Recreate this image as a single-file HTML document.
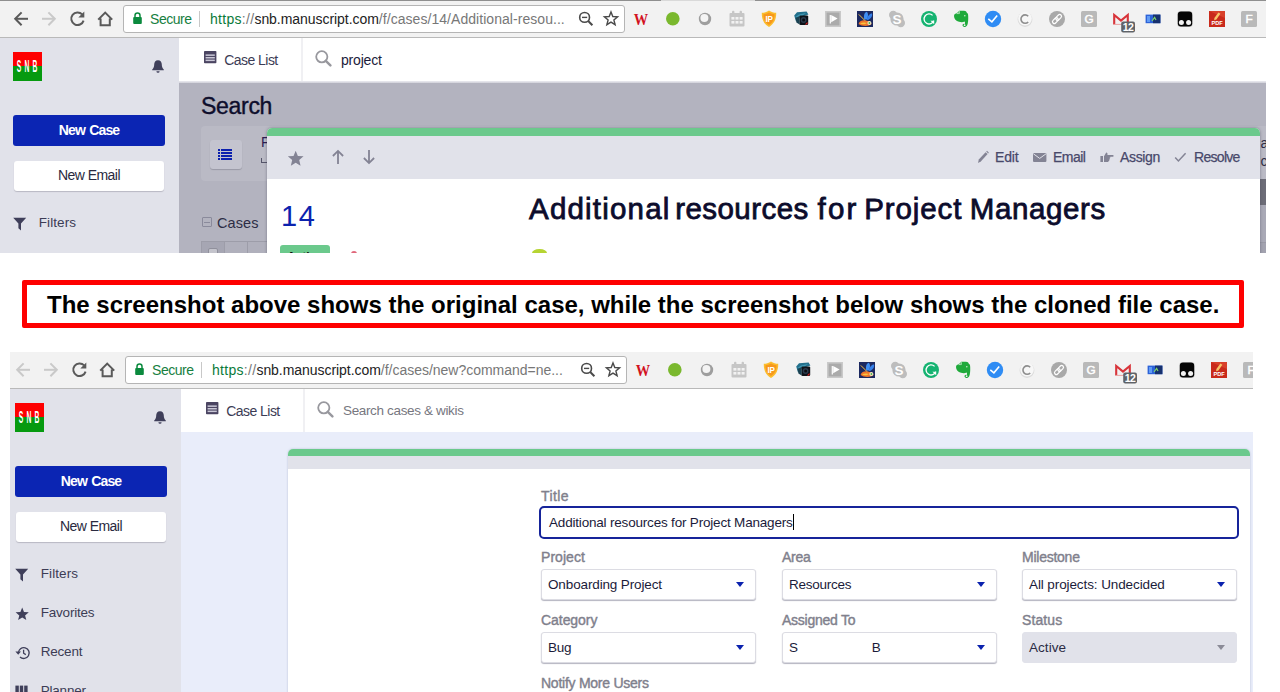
<!DOCTYPE html>
<html lang="en">
<head>
<meta charset="utf-8">
<title>Clone case comparison</title>
<style>
*{box-sizing:border-box;margin:0;padding:0}
html,body{width:1280px;height:692px;overflow:hidden;background:#fff}
body{font-family:"Liberation Sans",sans-serif;color:#1b1b3a;position:relative}
.abs{position:absolute}
.shot{position:absolute;overflow:hidden;background:#fff}
.inner{position:absolute;left:0;top:0;width:1266px;height:700px}
/* browser chrome */
.chrome{position:absolute;left:0;top:0;width:1266px;height:38px;background:#f2f2f2;border-bottom:1px solid #b9b9b9}
.chrome .topline{position:absolute;left:0;top:0;width:100%;height:1px;background:linear-gradient(90deg,#8f8f8f 0,#8f8f8f 661px,#d9d9d9 661px,#d9d9d9 755px,#8f8f8f 755px)}
.omni{position:absolute;left:123px;top:5px;width:502px;height:28px;background:#fff;border:1px solid #b5b5b5;border-radius:3px}
.omni .secure{position:absolute;left:26px;top:5px;font-size:14px;color:#17803f;letter-spacing:-0.45px}
.omni .sep{position:absolute;left:75px;top:5px;width:1px;height:16px;background:#c8c8c8}
.omni .url{position:absolute;left:86px;top:5px;font-size:14px;color:#777;white-space:nowrap;letter-spacing:0.05px}
.omni .url u{text-decoration:none;letter-spacing:0.3px}
.omni .url b{font-weight:normal;color:#222;letter-spacing:-0.05px}
.omni .url i{font-style:normal;color:#0b7a3a}
.ext{position:absolute;top:10px;width:17px;height:17px}
/* app */
.side{position:absolute;left:0;top:38px;width:179px;height:700px;background:#e1e2ea}
.logo{position:absolute;left:13px;top:52px;width:29px;height:29px;background:linear-gradient(#fe0000 0,#fe0000 49%,#069a10 49%,#069a10 100%)}
.logo span{position:absolute;top:5px;width:12px;margin-left:-6px;text-align:center;color:#fff;font-size:16px;font-weight:bold;line-height:20px;transform:scaleX(.42)}
.btn1{position:absolute;left:13px;top:115px;width:152px;height:31px;background:#0b25b3;border-radius:3px;color:#fff;font-weight:bold;font-size:14px;text-align:center;line-height:30px;letter-spacing:-0.9px;word-spacing:1.4px}
.btn2{position:absolute;left:14px;top:161px;width:150px;height:30px;background:#fff;border-radius:3px;color:#2a2a40;font-size:14px;text-align:center;line-height:29.5px;box-shadow:0 1px 1px #b9b9c4;letter-spacing:-0.55px}
.mi{position:absolute;left:38.7px;font-size:13.5px;color:#3c3c55;letter-spacing:-0.2px}
.hdr{position:absolute;left:179px;top:38px;width:1087px;height:45px;background:#fff}
.hdr .sepv{position:absolute;left:122px;top:0;width:2px;height:44px;background:#f0f0f3}
.hdr .cl{position:absolute;left:45.3px;top:13.5px;font-size:14px;color:#3c3c55;letter-spacing:-0.55px}
.hdr .q{position:absolute;left:162px;top:13.5px;font-size:14px;color:#1b1b3a;letter-spacing:-0.2px}

/* top main (search page, dimmed) */
.dim{position:absolute;left:179px;top:82px;width:1087px;height:700px;background:#b3b3bf}
.dim .h{position:absolute;left:22px;top:11px;font-size:23px;color:#0e0e2c;letter-spacing:-0.3px;-webkit-text-stroke:0.4px #0e0e2c}
.dim .panel{position:absolute;left:22px;top:44px;width:1070px;height:55px;background:#babac5;border-radius:4px}
.dim .lbtn{position:absolute;left:31px;top:58px;width:32px;height:29px;background:#c4c4cf;border-radius:3px;box-shadow:0 1px 1px #9a9aa6}
.dim .cases{position:absolute;left:38px;top:133px;font-size:14.5px;color:#2d2d45;letter-spacing:0.1px}
.dim .colps{position:absolute;left:23px;top:135px;width:10px;height:10px;border:1px solid #8a8a9b;border-radius:1px}
.dim .colps:after{content:"";position:absolute;left:1px;top:3.5px;width:6px;height:1px;background:#8a8a9b}
.dim .th{position:absolute;left:22px;top:159px;width:70px;height:20px;background:#b0b0bc;border-top:1px solid #9d9da9;border-left:1px solid #9d9da9}
.dim .th i{position:absolute;top:0;height:20px;border-right:1px solid #9d9da9}
.dim .th b{position:absolute;left:6px;top:6px;width:10px;height:10px;border:1px solid #90909c;border-radius:2px;background:#c4c4cc}
/* modal */
.modal{position:absolute;left:267px;top:128px;width:993px;height:600px;background:#fff;border-radius:5px 5px 0 0;overflow:hidden;box-shadow:0 0 3px rgba(60,60,80,.5)}
.modal .g{position:absolute;left:0;top:0;width:100%;height:8px;background:#6bc98c}
.modal .tb{position:absolute;left:0;top:8px;width:100%;height:43px;background:#e1e2ea}
.act{position:absolute;top:21px;font-size:14px;color:#48486a;letter-spacing:-0.2px;white-space:nowrap;-webkit-text-stroke:0.25px #48486a}
.num{position:absolute;left:14px;top:71.5px;font-size:29px;color:#0b22ae;letter-spacing:1.5px}
.ttl{position:absolute;left:0;top:64.3px;font-size:29.5px;color:#0c0c2c;white-space:nowrap;-webkit-text-stroke:0.8px #0c0c2c}
.ttl span{position:absolute;top:0}
.badge{position:absolute;left:13px;top:117px;width:50px;height:20px;border-radius:3px;background:#6bc98c;color:#111;font-size:12px;font-weight:bold;text-align:center;line-height:19px;padding-top:3px}

/* bottom main */
.main2{position:absolute;left:179px;top:81px;width:1087px;height:700px;background:#e9edfa}
.modal2{position:absolute;left:286px;top:98px;width:962px;height:600px;background:#fff;border-radius:5px 5px 0 0;overflow:hidden;box-shadow:0 0 2px rgba(120,130,170,.5)}
.modal2 .g{position:absolute;left:0;top:0;width:100%;height:7px;background:#6bc98c}
.modal2 .tb{position:absolute;left:0;top:7px;width:100%;height:13px;background:#e1e2ea}
.lbl{position:absolute;font-size:14px;color:#80808c;letter-spacing:-0.25px;margin-top:-1px;white-space:nowrap;-webkit-text-stroke:0.4px #80808c}
.sel{position:absolute;width:215px;height:31px;background:#fff;border:1px solid #dcdce3;border-radius:3px;box-shadow:0 1px 1px #b4b4c0;font-size:13.5px;color:#1b1b3a;line-height:29px;padding-left:6px;letter-spacing:-0.25px;white-space:nowrap}
.sel:after{content:"";position:absolute;right:10.6px;top:12px;border:4.4px solid transparent;border-top:5.4px solid #0b22ae;border-bottom:none}
.sel.dis{background:#e1e2ea;border-color:#e1e2ea;box-shadow:none;color:#2b2b45}
.sel.dis:after{border-top-color:#8b8b97}
.tin{position:absolute;left:251px;top:57px;width:700px;height:33px;border:2px solid #16249a;border-radius:5px;background:#fff;font-size:13.5px;line-height:29.5px;padding-left:8px;color:#1b1b3a;letter-spacing:-0.19px;white-space:nowrap}
.mic{position:absolute;left:13.2px;width:16px;height:16px}
.mic svg{position:absolute;left:0;top:2px}

</style>
</head>
<body>

<!-- ============ TOP SHOT ============ -->
<div class="shot" style="left:0;top:0;width:1266px;height:253px">
<div class="inner">
  <div class="chrome"><div class="topline"></div>
    <div class="omni"><span class="secure">Secure</span><span class="sep"></span><span class="url"><u><i>https</i>://</u><b>snb.manuscript.com</b>/f/cases/14/Additional-resou...</span></div>
    <svg class="csvg" width="1266" height="38" viewBox="0 0 1266 38" style="position:absolute;left:0;top:0"><g fill="none" stroke="#5a5a5a" stroke-width="2" stroke-linecap="butt" stroke-linejoin="miter"><path d="M28 18.8H16"/><path d="M21.6 12.4L15.2 18.8L21.6 25.2"/></g><g fill="none" stroke="#c9c9c9" stroke-width="2"><path d="M42 18.8H54"/><path d="M48.4 12.4L54.8 18.8L48.4 25.2"/></g><g><path d="M82.2 14.4A6.3 6.3 0 1 0 83.6 20.6" fill="none" stroke="#5a5a5a" stroke-width="2"/><path d="M84.3 11.6V17.6H78.3Z" fill="#5a5a5a"/></g><path d="M98.2 19.6L105.2 12.6L112.2 19.6M100.6 18.4V25.2H109.8V18.4" fill="none" stroke="#5a5a5a" stroke-width="2"/><g><rect x="133.2" y="17" width="8.6" height="7" rx="1" fill="#0b8a3e"/><path d="M135 17.4V15.4A2.5 2.5 0 0 1 140 15.4V17.4" fill="none" stroke="#0b8a3e" stroke-width="1.5"/></g><g fill="none" stroke="#4a4a4a" stroke-width="1.6"><circle cx="584.6" cy="17.4" r="4.9"/><path d="M588.2 21L592.4 25.2" stroke-width="2"/><path d="M582 17.4H587.2" stroke-width="1.4"/></g><path d="M611 12L612.8 16.5L617.6 16.9L613.9 20L615.1 24.7L611 22.1L606.9 24.7L608.1 20L604.4 16.9L609.2 16.5Z" fill="none" stroke="#4a4a4a" stroke-width="1.4" stroke-linejoin="miter"/><text x="641" y="25" text-anchor="middle" font-family="Liberation Serif,serif" font-weight="bold" font-size="17" fill="#d2121f" textLength="14.4" lengthAdjust="spacingAndGlyphs">W</text><circle cx="672.8" cy="18.8" r="6.8" fill="#7ab82e"/><circle cx="705" cy="19" r="6.2" fill="#9e9e9e"/><circle cx="704.4" cy="18" r="4" fill="#f4f4f4"/><g fill="#c6c6c6"><rect x="729.5" y="13" width="15" height="13.4" rx="1"/><rect x="732" y="10.8" width="2.4" height="4" rx="1"/><rect x="739.6" y="10.8" width="2.4" height="4" rx="1"/></g><g fill="#f2f2f2"><rect x="731.4" y="17" width="3" height="2.6"/><rect x="735.5" y="17" width="3" height="2.6"/><rect x="739.6" y="17" width="3" height="2.6"/><rect x="731.4" y="21" width="3" height="2.6"/><rect x="735.5" y="21" width="3" height="2.6"/><rect x="739.6" y="21" width="3" height="2.6"/></g><path d="M769 10.4C771.4 12 773.8 12.6 776.2 12.8C776.4 18.8 774.4 24 769 26.9C763.6 24 761.6 18.8 761.8 12.8C764.2 12.6 766.6 12 769 10.4Z" fill="#fbbd2c"/><path d="M769 12.4C770.8 13.4 772.6 14 774.6 14.2C774.6 18.8 773 22.6 769 25C765 22.6 763.4 18.8 763.4 14.2C765.4 14 767.2 13.4 769 12.4Z" fill="#f7981d"/><text x="769.2" y="22" text-anchor="middle" font-family="Liberation Sans,sans-serif" font-weight="bold" font-size="9.6" fill="#fff" textLength="7.6" lengthAdjust="spacingAndGlyphs">IP</text><g><path d="M794.2 15.4L797 12.2L806.6 11.6L808.4 14.6L800 17.6L796 21.6Z" fill="#23708c"/><path d="M795.4 17L799 14.4L806 13L800 17.4Z" fill="#3f98b4"/><rect x="799.4" y="15.4" width="8.8" height="9.6" rx="1.2" fill="#0e1218"/><path d="M795.6 18L799.6 16V24.4L796.4 22.6Z" fill="#1a4252"/><circle cx="803.6" cy="20" r="2.9" fill="#2a3a4c"/><circle cx="803.6" cy="20" r="1.5" fill="#0a0d12"/><path d="M805.6 24.6L807.6 22.6" stroke="#d22" stroke-width="1.2"/></g><rect x="825" y="11" width="16" height="16" fill="#c9c9c9"/><rect x="826.6" y="12.6" width="12.8" height="12.8" fill="#ababab"/><path d="M830.3 15V23.6" stroke="#fff" stroke-width="1.2"/><path d="M831.2 15L837.6 18.6L831.2 22.2Z" fill="#fff"/><rect x="857" y="11" width="16" height="16" fill="#1c2960"/><path d="M864.2 19.6C863.4 16 864.4 12.6 866.6 11.8C868.4 13 868.6 16.6 866.6 19.6Z" fill="#3f8ff2"/><path d="M866.6 19.6C867.6 15.6 870 13.2 872 13.4C872.8 16 870.6 19 867.4 20Z" fill="#3580ea"/><path d="M858.6 24C859 21.4 862 19.8 865.6 20.4C868.8 20.8 871.4 22.2 871.6 24C869 26.6 861.4 26.4 858.6 24Z" fill="#f0762a"/><path d="M860 23.6C862 22.2 865 22 867 23C865 24.6 862 24.8 860 23.6Z" fill="#f7c53f"/><circle cx="869.4" cy="23" r="2" fill="#f4e9c8"/><circle cx="869.4" cy="23" r="0.9" fill="#4ab04a"/><path d="M858.8 14.4L865 20.6" stroke="#f3c24a" stroke-width="1"/><g fill="#bdbdbd"><circle cx="897" cy="19" r="6.6"/><circle cx="893.2" cy="15" r="4.2"/><circle cx="900.8" cy="23" r="4.2"/></g><text x="897" y="23.8" text-anchor="middle" font-family="Liberation Sans,sans-serif" font-weight="bold" font-size="13.5" fill="#fff">S</text><circle cx="929" cy="19" r="8" fill="#15b371"/><path d="M932.6 15.4A5 5 0 1 0 933.8 20.6" fill="none" stroke="#fff" stroke-width="1.3"/><path d="M930.4 20.8H934.2V24.2Z" fill="#fff"/><path d="M956.2 13.4L959.2 10.8H964C965.6 10.8 966.6 11.6 966.8 12.8C967.8 13.2 968.2 14.2 968.2 16C968.4 20 968 23.6 967.2 25.2C966.4 26.8 964.4 27.4 963.2 26.6C962 25.8 962.4 23.8 964.2 23.8L965 24C965.2 23 965 22.2 964.6 21.6C963 22.4 961 22.4 959 21.8C956 21 954 18.8 954 16C954 14.6 954.8 13.6 956.2 13.4Z" fill="#1faa3b"/><path d="M956.8 13.6L959.4 11.2V13.6Z" fill="none" stroke="#d6f0d8" stroke-width="0.7"/><circle cx="964.8" cy="15.8" r="0.8" fill="#c9ecc9"/><circle cx="964.6" cy="25.2" r="0.9" fill="#f2f2f2"/><circle cx="993" cy="19" r="8.2" fill="#2f8cf4"/><path d="M988.3 18.9L991.9 21.8L997.2 15.4" fill="none" stroke="#fff" stroke-width="1.6"/><circle cx="1025" cy="19.6" r="7.4" fill="#dcdcdc"/><circle cx="1025" cy="18.6" r="6.8" fill="#f7f7f7"/><path d="M1028.2 16.2A4.2 4.2 0 1 0 1028.2 22" fill="none" stroke="#8e8e8e" stroke-width="1.6"/><circle cx="1057" cy="19" r="8" fill="#a9a9a9"/><g fill="none" stroke="#fff" stroke-width="1.2" transform="rotate(-45 1057 19)"><rect x="1051.4" y="17.2" width="6.6" height="3.6" rx="1.8"/><rect x="1056" y="17.2" width="6.6" height="3.6" rx="1.8"/></g><rect x="1081" y="11" width="16" height="16" rx="1.5" fill="#b9b9b9"/><text x="1089" y="23.3" text-anchor="middle" font-family="Liberation Sans,sans-serif" font-size="11.8" fill="#fff" stroke="#fff" stroke-width="0.45">G</text><path d="M1114.2 24.6V15L1121 20.6L1127.8 15V24.6" fill="none" stroke="#d8343a" stroke-width="2.1"/><path d="M1114 24.4H1128" stroke="#e9a0a0" stroke-width="1"/><rect x="1121.2" y="21.6" width="13.8" height="11" rx="2" fill="#5f6368"/><text x="1128.1" y="30.6" text-anchor="middle" font-family="Liberation Sans,sans-serif" font-size="10.5" font-weight="bold" fill="#fff" letter-spacing="-0.6">12</text><rect x="1145.6" y="14.6" width="14.8" height="8.6" fill="#2c62d8"/><rect x="1153" y="14.6" width="7.4" height="8.6" fill="#16306e"/><rect x="1147" y="16" width="3" height="6" fill="#5f9bf5"/><path d="M1152 21L1154.6 17.4L1156 20" fill="none" stroke="#7fd46a" stroke-width="1.2"/><rect x="1177" y="11" width="16" height="16" rx="3.6" fill="#d8d8d8"/><rect x="1177.8" y="11.6" width="14.4" height="14.8" rx="3.2" fill="#050505"/><circle cx="1181.4" cy="22.6" r="2.5" fill="#f2f2f2"/><circle cx="1188.6" cy="22.6" r="2.5" fill="#f2f2f2"/><rect x="1209" y="11" width="16" height="16" fill="#c92a1b"/><path d="M1209 11H1225V18Z" fill="#d8402a"/><path d="M1214.4 18L1218.4 12.4L1220.4 13.8L1216.4 19.4L1214.2 20.2Z" fill="#f8c467"/><text x="1217" y="24.6" text-anchor="middle" font-family="Liberation Sans,sans-serif" font-weight="bold" font-size="5.6" fill="#fff">PDF</text><rect x="1241" y="11" width="16" height="16" rx="1.5" fill="#b9b9b9"/><text x="1249" y="23.3" text-anchor="middle" font-family="Liberation Sans,sans-serif" font-size="11.8" fill="#fff" stroke="#fff" stroke-width="0.45">F</text></svg>
  </div>
  <div class="side"></div>
  <div class="logo"><span style="left:5.5px">S</span><span style="left:14.1px">N</span><span style="left:22px">B</span></div>
  <svg class="abs" style="left:151px;top:59px" width="14" height="15" viewBox="0 0 14 15"><path d="M7 1.2C9.6 1.2 10.8 3.2 10.8 5.6C10.8 8 11.4 9.2 12.8 10.4V11.2H1.2V10.4C2.6 9.2 3.2 8 3.2 5.6C3.2 3.2 4.4 1.2 7 1.2Z" fill="#3f3f5a"/><path d="M5.4 12.2H8.6A1.6 1.6 0 0 1 5.4 12.2Z" fill="#3f3f5a"/></svg>
  <div class="btn1">New Case</div>
  <div class="btn2">New Email</div>
  <div class="mic" style="top:214.6px"><svg width="14" height="14" viewBox="0 0 14 14"><path d="M0.2 0.8H13.2L8 6.6V13.4L5.4 11.2V6.6Z" fill="#3f3f5a"/></svg></div><div class="mi" style="top:215.4px;letter-spacing:0.1px">Filters</div>
  <div class="hdr"><div class="sepv"></div><svg class="abs" style="left:25px;top:13.2px" width="13" height="13" viewBox="0 0 13 13"><rect x="0" y="0" width="12.4" height="12.2" rx="0.8" fill="#4b4562"/><rect x="1.6" y="3.4" width="9.2" height="1.5" fill="#c9c7d6"/><rect x="1.6" y="6" width="9.2" height="1.5" fill="#c9c7d6"/><rect x="1.6" y="8.6" width="9.2" height="1.5" fill="#c9c7d6"/></svg><span class="cl">Case List</span><svg class="abs" style="left:136px;top:12px" width="17" height="17" viewBox="0 0 17 17"><circle cx="6.8" cy="6.8" r="5.6" fill="none" stroke="#98989e" stroke-width="1.8"/><path d="M10.8 10.8L15.4 15.4" stroke="#98989e" stroke-width="2.4" stroke-linecap="round"/></svg><span class="q">project</span></div>
  <div class="dim">
    <div class="h">Search</div>
    <div class="panel"></div>
    <div class="lbtn"><svg width="32" height="29" viewBox="0 0 32 29"><g fill="#0b1fae" transform="translate(-1 0)"><rect x="9" y="9" width="2" height="2"/><rect x="12" y="9" width="11" height="2"/><rect x="9" y="12" width="2" height="2"/><rect x="12" y="12" width="11" height="2"/><rect x="9" y="15" width="2" height="2"/><rect x="12" y="15" width="11" height="2"/><rect x="9" y="18" width="2" height="2"/><rect x="12" y="18" width="11" height="2"/></g></svg></div>
    <div class="abs" style="left:82px;top:52px;font-size:14px;color:#2a1a50">F</div>
    <div class="abs" style="left:1081px;top:96.5px;width:6px;height:26px;background:#6c6c77"></div>
    <div class="abs" style="left:1081px;top:122.5px;width:6px;height:37px;background:#a9a9b6"></div>
    <div class="abs" style="left:1081px;top:159.5px;width:6px;height:20px;background:#a3a3b0;border-top:1px solid #9a9aa6"></div>
    <div class="abs" style="left:1081.5px;top:53px;font-size:14px;color:#2d2d45">a</div>
    <div class="abs" style="left:1081.5px;top:71px;font-size:14px;color:#2d2d45">c</div>
    <div class="colps"></div><div class="cases">Cases</div>
    <div class="th"><i style="left:0;width:23px;background:#a6a6b3"></i><i style="left:23px;width:23px"></i><b></b></div>
    <div class="abs" style="left:82px;top:76px;width:6px;height:5px;border-left:1px solid #55556a;border-bottom:1px solid #55556a"></div>
  </div>
  <div class="abs" style="left:179px;top:81px;width:1087px;height:2px;background:linear-gradient(#ececf1,#cfcfd8)"></div>
  <div class="modal">
    <div class="g"></div><div class="tb"></div>
    <svg class="abs" style="left:19.6px;top:21.7px" width="17.6" height="16.6" viewBox="0 0 17 16"><path d="M8.4 0.6L10.5 5.7L16 6.1L11.8 9.7L13.1 15.1L8.4 12.2L3.7 15.1L5 9.7L0.8 6.1L6.3 5.7Z" fill="#838394"/></svg><svg class="abs" style="left:64.3px;top:21.3px" width="14" height="16" viewBox="0 0 14 16"><path d="M7 15V2M1.9 7L7 1.9L12.1 7" fill="none" stroke="#838394" stroke-width="1.8"/></svg><svg class="abs" style="left:95.3px;top:21.3px" width="14" height="16" viewBox="0 0 14 16"><path d="M7 1V14M1.9 9L7 14.1L12.1 9" fill="none" stroke="#838394" stroke-width="1.8"/></svg><svg class="abs" style="left:710px;top:22px" width="12" height="14" viewBox="0 0 12 14"><path d="M1 13L1.8 9.6L8.6 2.2L10.6 4L3.8 11.6Z" fill="#838394"/><path d="M9.2 1.6L10 0.8L11.8 2.6L11.2 3.4Z" fill="#838394"/></svg><svg class="abs" style="left:766px;top:25px" width="14" height="10" viewBox="0 0 14 10"><rect x="0" y="0" width="13.4" height="9" rx="1" fill="#838394"/><path d="M0.4 0.8L6.7 5.4L13 0.8" fill="none" stroke="#e1e2ea" stroke-width="1"/></svg><svg class="abs" style="left:833px;top:24px" width="14" height="11" viewBox="0 0 14 11"><rect x="0.4" y="4" width="2.6" height="6" fill="#838394"/><path d="M4 10V4.2L6.2 0.6C7.4 0.6 7.8 1.6 7.4 3H13C13.8 3 13.8 4.8 13 4.8H10.4V5.6H9.8V7.4H9.2V9H8.4V10Z" fill="#838394"/></svg><svg class="abs" style="left:907px;top:24px" width="13" height="11" viewBox="0 0 13 11"><path d="M1.2 5.6L4.4 9L11.6 1.2" fill="none" stroke="#838394" stroke-width="1.5"/></svg>
    <span class="act" style="left:728px">Edit</span>
    <span class="act" style="left:786px;letter-spacing:-0.55px">Email</span>
    <span class="act" style="left:853px;letter-spacing:-0.35px">Assign</span>
    <span class="act" style="left:927px;letter-spacing:-0.7px">Resolve</span>
    <div class="num">14</div>
    <div class="ttl" id="ttl"><span style="left:262px;letter-spacing:1.2px">Additional </span><span style="left:408.2px;letter-spacing:.45px">resources </span><span style="left:550.5px;letter-spacing:2.2px">for </span><span style="left:597.2px;letter-spacing:.9px">Project </span><span style="left:702.7px;letter-spacing:.62px">Managers</span></div>
    <div class="badge">Active</div>
    <div class="abs" style="left:84px;top:122.6px;width:6.4px;height:6px;border-radius:50%;background:#e0667a"></div>
    <div class="abs" style="left:265px;top:121.4px;width:14.5px;height:8px;border-radius:50% 50% 0 0;background:#b6d433"></div>
  </div>

</div>
</div>

<!-- ============ BANNER ============ -->
<div class="abs" style="left:22px;top:280px;width:1222px;height:48px;border:5px solid #fe0000;border-radius:2px;background:#fff"></div>
<div class="abs" id="banner" style="left:47px;top:290.5px;font-size:24px;font-weight:bold;color:#000;white-space:nowrap;line-height:28px">The screenshot above shows the original case, while the screenshot below shows the cloned file case.</div>

<!-- ============ BOTTOM SHOT ============ -->
<div class="shot" style="left:10px;top:352px;width:1243px;height:340px">
<div class="inner" style="left:-8px;top:-1px">
  <div class="chrome"><div class="topline"></div>
    <div class="omni"><span class="secure">Secure</span><span class="sep"></span><span class="url" style="letter-spacing:-0.02px"><u><i>https</i>://</u><b>snb.manuscript.com</b>/f/cases/new?command=ne...</span></div>
    <svg class="csvg" width="1266" height="38" viewBox="0 0 1266 38" style="position:absolute;left:0;top:0"><g fill="none" stroke="#c9c9c9" stroke-width="2" stroke-linecap="butt" stroke-linejoin="miter"><path d="M28 18.8H16"/><path d="M21.6 12.4L15.2 18.8L21.6 25.2"/></g><g fill="none" stroke="#c9c9c9" stroke-width="2"><path d="M42 18.8H54"/><path d="M48.4 12.4L54.8 18.8L48.4 25.2"/></g><g><path d="M82.2 14.4A6.3 6.3 0 1 0 83.6 20.6" fill="none" stroke="#5a5a5a" stroke-width="2"/><path d="M84.3 11.6V17.6H78.3Z" fill="#5a5a5a"/></g><path d="M98.2 19.6L105.2 12.6L112.2 19.6M100.6 18.4V25.2H109.8V18.4" fill="none" stroke="#5a5a5a" stroke-width="2"/><g><rect x="133.2" y="17" width="8.6" height="7" rx="1" fill="#0b8a3e"/><path d="M135 17.4V15.4A2.5 2.5 0 0 1 140 15.4V17.4" fill="none" stroke="#0b8a3e" stroke-width="1.5"/></g><g fill="none" stroke="#4a4a4a" stroke-width="1.6"><circle cx="584.6" cy="17.4" r="4.9"/><path d="M588.2 21L592.4 25.2" stroke-width="2"/><path d="M582 17.4H587.2" stroke-width="1.4"/></g><path d="M611 12L612.8 16.5L617.6 16.9L613.9 20L615.1 24.7L611 22.1L606.9 24.7L608.1 20L604.4 16.9L609.2 16.5Z" fill="none" stroke="#4a4a4a" stroke-width="1.4" stroke-linejoin="miter"/><text x="641" y="25" text-anchor="middle" font-family="Liberation Serif,serif" font-weight="bold" font-size="17" fill="#d2121f" textLength="14.4" lengthAdjust="spacingAndGlyphs">W</text><circle cx="672.8" cy="18.8" r="6.8" fill="#7ab82e"/><circle cx="705" cy="19" r="6.2" fill="#9e9e9e"/><circle cx="704.4" cy="18" r="4" fill="#f4f4f4"/><g fill="#c6c6c6"><rect x="729.5" y="13" width="15" height="13.4" rx="1"/><rect x="732" y="10.8" width="2.4" height="4" rx="1"/><rect x="739.6" y="10.8" width="2.4" height="4" rx="1"/></g><g fill="#f2f2f2"><rect x="731.4" y="17" width="3" height="2.6"/><rect x="735.5" y="17" width="3" height="2.6"/><rect x="739.6" y="17" width="3" height="2.6"/><rect x="731.4" y="21" width="3" height="2.6"/><rect x="735.5" y="21" width="3" height="2.6"/><rect x="739.6" y="21" width="3" height="2.6"/></g><path d="M769 10.4C771.4 12 773.8 12.6 776.2 12.8C776.4 18.8 774.4 24 769 26.9C763.6 24 761.6 18.8 761.8 12.8C764.2 12.6 766.6 12 769 10.4Z" fill="#fbbd2c"/><path d="M769 12.4C770.8 13.4 772.6 14 774.6 14.2C774.6 18.8 773 22.6 769 25C765 22.6 763.4 18.8 763.4 14.2C765.4 14 767.2 13.4 769 12.4Z" fill="#f7981d"/><text x="769.2" y="22" text-anchor="middle" font-family="Liberation Sans,sans-serif" font-weight="bold" font-size="9.6" fill="#fff" textLength="7.6" lengthAdjust="spacingAndGlyphs">IP</text><g><path d="M794.2 15.4L797 12.2L806.6 11.6L808.4 14.6L800 17.6L796 21.6Z" fill="#23708c"/><path d="M795.4 17L799 14.4L806 13L800 17.4Z" fill="#3f98b4"/><rect x="799.4" y="15.4" width="8.8" height="9.6" rx="1.2" fill="#0e1218"/><path d="M795.6 18L799.6 16V24.4L796.4 22.6Z" fill="#1a4252"/><circle cx="803.6" cy="20" r="2.9" fill="#2a3a4c"/><circle cx="803.6" cy="20" r="1.5" fill="#0a0d12"/><path d="M805.6 24.6L807.6 22.6" stroke="#d22" stroke-width="1.2"/></g><rect x="825" y="11" width="16" height="16" fill="#c9c9c9"/><rect x="826.6" y="12.6" width="12.8" height="12.8" fill="#ababab"/><path d="M830.3 15V23.6" stroke="#fff" stroke-width="1.2"/><path d="M831.2 15L837.6 18.6L831.2 22.2Z" fill="#fff"/><rect x="857" y="11" width="16" height="16" fill="#1c2960"/><path d="M864.2 19.6C863.4 16 864.4 12.6 866.6 11.8C868.4 13 868.6 16.6 866.6 19.6Z" fill="#3f8ff2"/><path d="M866.6 19.6C867.6 15.6 870 13.2 872 13.4C872.8 16 870.6 19 867.4 20Z" fill="#3580ea"/><path d="M858.6 24C859 21.4 862 19.8 865.6 20.4C868.8 20.8 871.4 22.2 871.6 24C869 26.6 861.4 26.4 858.6 24Z" fill="#f0762a"/><path d="M860 23.6C862 22.2 865 22 867 23C865 24.6 862 24.8 860 23.6Z" fill="#f7c53f"/><circle cx="869.4" cy="23" r="2" fill="#f4e9c8"/><circle cx="869.4" cy="23" r="0.9" fill="#4ab04a"/><path d="M858.8 14.4L865 20.6" stroke="#f3c24a" stroke-width="1"/><g fill="#bdbdbd"><circle cx="897" cy="19" r="6.6"/><circle cx="893.2" cy="15" r="4.2"/><circle cx="900.8" cy="23" r="4.2"/></g><text x="897" y="23.8" text-anchor="middle" font-family="Liberation Sans,sans-serif" font-weight="bold" font-size="13.5" fill="#fff">S</text><circle cx="929" cy="19" r="8" fill="#15b371"/><path d="M932.6 15.4A5 5 0 1 0 933.8 20.6" fill="none" stroke="#fff" stroke-width="1.3"/><path d="M930.4 20.8H934.2V24.2Z" fill="#fff"/><path d="M956.2 13.4L959.2 10.8H964C965.6 10.8 966.6 11.6 966.8 12.8C967.8 13.2 968.2 14.2 968.2 16C968.4 20 968 23.6 967.2 25.2C966.4 26.8 964.4 27.4 963.2 26.6C962 25.8 962.4 23.8 964.2 23.8L965 24C965.2 23 965 22.2 964.6 21.6C963 22.4 961 22.4 959 21.8C956 21 954 18.8 954 16C954 14.6 954.8 13.6 956.2 13.4Z" fill="#1faa3b"/><path d="M956.8 13.6L959.4 11.2V13.6Z" fill="none" stroke="#d6f0d8" stroke-width="0.7"/><circle cx="964.8" cy="15.8" r="0.8" fill="#c9ecc9"/><circle cx="964.6" cy="25.2" r="0.9" fill="#f2f2f2"/><circle cx="993" cy="19" r="8.2" fill="#2f8cf4"/><path d="M988.3 18.9L991.9 21.8L997.2 15.4" fill="none" stroke="#fff" stroke-width="1.6"/><circle cx="1025" cy="19.6" r="7.4" fill="#dcdcdc"/><circle cx="1025" cy="18.6" r="6.8" fill="#f7f7f7"/><path d="M1028.2 16.2A4.2 4.2 0 1 0 1028.2 22" fill="none" stroke="#8e8e8e" stroke-width="1.6"/><circle cx="1057" cy="19" r="8" fill="#a9a9a9"/><g fill="none" stroke="#fff" stroke-width="1.2" transform="rotate(-45 1057 19)"><rect x="1051.4" y="17.2" width="6.6" height="3.6" rx="1.8"/><rect x="1056" y="17.2" width="6.6" height="3.6" rx="1.8"/></g><rect x="1081" y="11" width="16" height="16" rx="1.5" fill="#b9b9b9"/><text x="1089" y="23.3" text-anchor="middle" font-family="Liberation Sans,sans-serif" font-size="11.8" fill="#fff" stroke="#fff" stroke-width="0.45">G</text><path d="M1114.2 24.6V15L1121 20.6L1127.8 15V24.6" fill="none" stroke="#d8343a" stroke-width="2.1"/><path d="M1114 24.4H1128" stroke="#e9a0a0" stroke-width="1"/><rect x="1121.2" y="21.6" width="13.8" height="11" rx="2" fill="#5f6368"/><text x="1128.1" y="30.6" text-anchor="middle" font-family="Liberation Sans,sans-serif" font-size="10.5" font-weight="bold" fill="#fff" letter-spacing="-0.6">12</text><rect x="1145.6" y="14.6" width="14.8" height="8.6" fill="#2c62d8"/><rect x="1153" y="14.6" width="7.4" height="8.6" fill="#16306e"/><rect x="1147" y="16" width="3" height="6" fill="#5f9bf5"/><path d="M1152 21L1154.6 17.4L1156 20" fill="none" stroke="#7fd46a" stroke-width="1.2"/><rect x="1177" y="11" width="16" height="16" rx="3.6" fill="#d8d8d8"/><rect x="1177.8" y="11.6" width="14.4" height="14.8" rx="3.2" fill="#050505"/><circle cx="1181.4" cy="22.6" r="2.5" fill="#f2f2f2"/><circle cx="1188.6" cy="22.6" r="2.5" fill="#f2f2f2"/><rect x="1209" y="11" width="16" height="16" fill="#c92a1b"/><path d="M1209 11H1225V18Z" fill="#d8402a"/><path d="M1214.4 18L1218.4 12.4L1220.4 13.8L1216.4 19.4L1214.2 20.2Z" fill="#f8c467"/><text x="1217" y="24.6" text-anchor="middle" font-family="Liberation Sans,sans-serif" font-weight="bold" font-size="5.6" fill="#fff">PDF</text><rect x="1241" y="11" width="16" height="16" rx="1.5" fill="#b9b9b9"/><text x="1249" y="23.3" text-anchor="middle" font-family="Liberation Sans,sans-serif" font-size="11.8" fill="#fff" stroke="#fff" stroke-width="0.45">F</text></svg>
  </div>
  <div class="side"></div>
  <div class="logo"><span style="left:5.5px">S</span><span style="left:14.1px">N</span><span style="left:22px">B</span></div>
  <svg class="abs" style="left:151px;top:59px" width="14" height="15" viewBox="0 0 14 15"><path d="M7 1.2C9.6 1.2 10.8 3.2 10.8 5.6C10.8 8 11.4 9.2 12.8 10.4V11.2H1.2V10.4C2.6 9.2 3.2 8 3.2 5.6C3.2 3.2 4.4 1.2 7 1.2Z" fill="#3f3f5a"/><path d="M5.4 12.2H8.6A1.6 1.6 0 0 1 5.4 12.2Z" fill="#3f3f5a"/></svg>
  <div class="btn1">New Case</div>
  <div class="btn2">New Email</div>
  <div class="mic" style="top:214.6px"><svg width="14" height="14" viewBox="0 0 14 14"><path d="M0.2 0.8H13.2L8 6.6V13.4L5.4 11.2V6.6Z" fill="#3f3f5a"/></svg></div><div class="mi" style="top:215.4px;letter-spacing:0.1px">Filters</div>
  <div class="mic" style="top:253.6px"><svg width="15" height="14" viewBox="0 0 15 14"><path d="M7.2 0.6L9 5L13.8 5.3L10.1 8.4L11.3 13L7.2 10.5L3.1 13L4.3 8.4L0.6 5.3L5.4 5Z" fill="#3f3f5a"/></svg></div><div class="mi" style="top:254.4px">Favorites</div>
  <div class="mic" style="top:292.6px"><svg width="16" height="14" viewBox="0 0 16 14"><path d="M3.4 7A5.4 5.4 0 1 1 5 10.9" fill="none" stroke="#3f3f5a" stroke-width="1.4"/><path d="M0.4 5.6H6L3.2 8.8Z" fill="#3f3f5a"/><path d="M8.6 3.8V7.2L10.8 8.6" fill="none" stroke="#3f3f5a" stroke-width="1.3"/></svg></div><div class="mi" style="top:293.4px">Recent</div>
  <div class="mic" style="top:331.6px"><svg width="14" height="14" viewBox="0 0 14 14"><rect x="0.4" y="0.6" width="3.4" height="13" fill="#3f3f5a"/><rect x="4.8" y="0.6" width="3.4" height="13" fill="#3f3f5a"/><rect x="9.2" y="0.6" width="3.4" height="13" fill="#3f3f5a"/></svg></div><div class="mi" style="top:332.4px">Planner</div>
  <div class="hdr"><div class="sepv"></div><svg class="abs" style="left:25px;top:13.2px" width="13" height="13" viewBox="0 0 13 13"><rect x="0" y="0" width="12.4" height="12.2" rx="0.8" fill="#4b4562"/><rect x="1.6" y="3.4" width="9.2" height="1.5" fill="#c9c7d6"/><rect x="1.6" y="6" width="9.2" height="1.5" fill="#c9c7d6"/><rect x="1.6" y="8.6" width="9.2" height="1.5" fill="#c9c7d6"/></svg><span class="cl">Case List</span><svg class="abs" style="left:136px;top:12px" width="17" height="17" viewBox="0 0 17 17"><circle cx="6.8" cy="6.8" r="5.6" fill="none" stroke="#98989e" stroke-width="1.8"/><path d="M10.8 10.8L15.4 15.4" stroke="#98989e" stroke-width="2.4" stroke-linecap="round"/></svg><span class="q" style="color:#77777f;font-size:13.5px;letter-spacing:-0.35px;top:14px">Search cases &amp; wikis</span></div>
  <div class="main2"></div>
  <div class="modal2">
    <div class="g"></div><div class="tb"></div>
    <div class="lbl" style="left:253px;top:39.8px;letter-spacing:.4px">Title</div>
    <div class="tin"><span id="tinv">Additional resources for Project Managers</span><span style="display:inline-block;width:1px;height:16px;background:#000;vertical-align:-3px"></span></div>
    <div class="lbl" style="left:253px;top:101px;letter-spacing:.05px">Project</div>
    <div class="lbl" style="left:494px;top:101px">Area</div>
    <div class="lbl" style="left:734px;top:101px">Milestone</div>
    <div class="sel" style="left:253px;top:120px;letter-spacing:-.13px">Onboarding Project</div>
    <div class="sel" style="left:494px;top:120px">Resources</div>
    <div class="sel" style="left:734px;top:120px;letter-spacing:-.1px">All projects: Undecided</div>
    <div class="lbl" style="left:253px;top:164px;letter-spacing:-.05px">Category</div>
    <div class="lbl" style="left:494px;top:164px">Assigned To</div>
    <div class="lbl" style="left:734px;top:164px;letter-spacing:.1px">Status</div>
    <div class="sel" style="left:253px;top:183px">Bug</div>
    <div class="sel" style="left:494px;top:183px">S<span style="display:inline-block;width:74px"></span>B</div>
    <div class="sel dis" style="left:734px;top:183px;letter-spacing:.05px">Active</div>
    <div class="lbl" style="left:253px;top:227px">Notify More Users</div>
  </div>

</div>
</div>

</body>
</html>
